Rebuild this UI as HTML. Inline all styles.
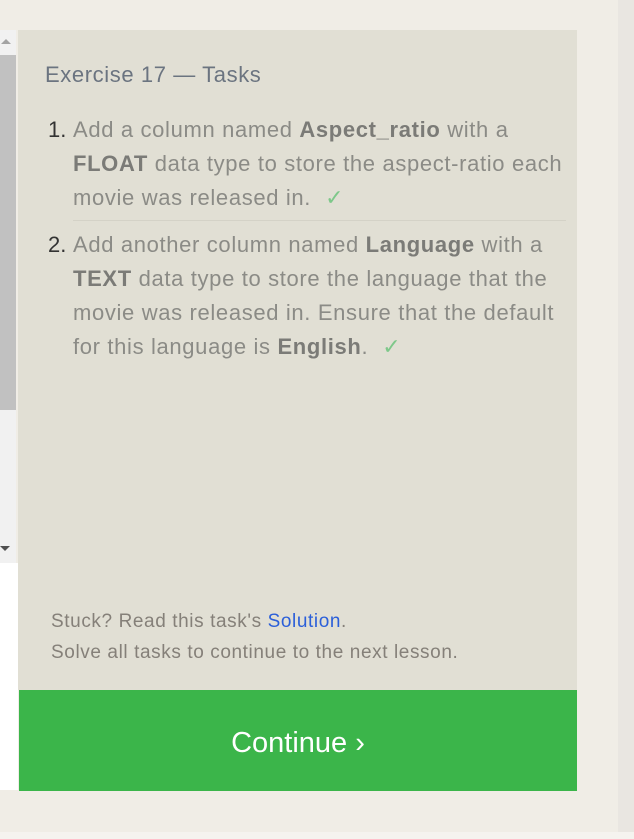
<!DOCTYPE html>
<html><head><style>
html,body{margin:0;padding:0}
body{width:634px;height:839px;background:#f0ede6;position:relative;overflow:hidden;font-family:"Liberation Sans",sans-serif}
.rs{position:absolute;left:618px;top:0;width:16px;height:832px;background:#e9e6e1}
.bot{position:absolute;left:0;top:832px;width:634px;height:7px;background:#f5f3ef}
.sb{position:absolute;left:0;top:30px;width:16px;height:533px;background:#f1f1f1}
.thumb{position:absolute;left:0;top:25px;width:16px;height:355px;background:#c1c1c1}
.wh{position:absolute;left:0;top:563px;width:18px;height:227px;background:#fff}
.up{position:absolute;left:1px;top:39px;width:0;height:0;border-left:5px solid transparent;border-right:5px solid transparent;border-bottom:5px solid #a3a3a3}
.dn{position:absolute;left:0px;top:546px;width:0;height:0;border-left:5px solid transparent;border-right:5px solid transparent;border-top:5px solid #505050}
.panel{position:absolute;left:18px;top:30px;width:559px;height:660px;background:#e1dfd4}
h1{position:absolute;left:45px;top:62px;margin:0;font-weight:normal;font-size:22px;letter-spacing:0.6px;color:#6b7480;white-space:nowrap}
.it{position:absolute;left:73px;font-size:22px;letter-spacing:0.65px;line-height:34px;color:#8b8b86;white-space:nowrap}
.it b{color:#7b7b77}
.n{position:absolute;left:-25px;top:0;color:#333;letter-spacing:0}
.ck{color:#7ec88a;margin-left:14px}
.sep{position:absolute;left:73px;top:220px;width:493px;height:1px;background:#d4d2c7}
.foot{position:absolute;left:51px;font-size:19px;letter-spacing:0.6px;color:#858079;white-space:nowrap}
.btn{position:absolute;left:19px;top:690px;width:558px;height:101px;background:#3bb54a;color:#fff;font-size:29px;text-align:center;line-height:106px}
</style></head><body>
<div class="rs"></div><div class="bot"></div>
<div class="sb"><div class="thumb"></div></div>
<div class="up"></div><div class="dn"></div>
<div class="wh"></div>
<div class="panel"></div>
<h1>Exercise 17 — Tasks</h1>
<div class="it" style="top:113px"><span class="n">1.</span>Add a column named <b>Aspect_ratio</b> with a<br><b>FLOAT</b> data type to store the aspect-ratio each<br>movie was released in.<span class="ck">✓</span></div>
<div class="sep"></div>
<div class="it" style="top:228px"><span class="n">2.</span>Add another column named <b>Language</b> with a<br><b>TEXT</b> data type to store the language that the<br>movie was released in. Ensure that the default<br>for this language is <b>English</b>.<span class="ck">✓</span></div>
<div class="foot" style="top:611px">Stuck? Read this task's <span style="color:#2b5fd9">Solution</span>.</div>
<div class="foot" style="top:642px">Solve all tasks to continue to the next lesson.</div>
<div class="btn">Continue ›</div>
</body></html>
